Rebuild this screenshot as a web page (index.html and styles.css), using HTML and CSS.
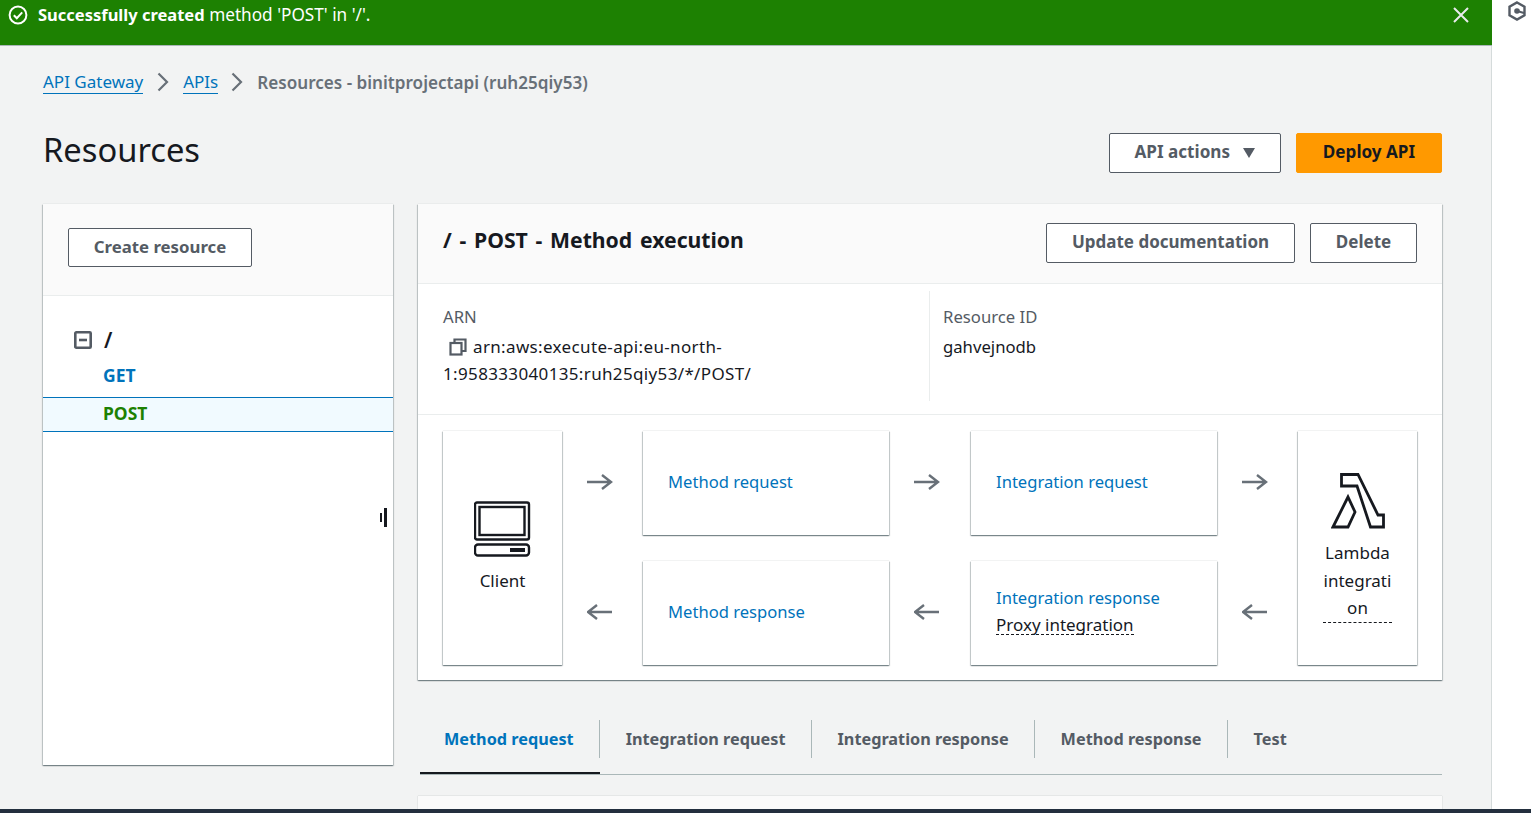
FILE: index.html
```html
<!DOCTYPE html>
<html lang="en">
<head>
  <meta charset="UTF-8">
  <title>Resources - API Gateway</title>
  <link rel="stylesheet" href="styles.css">
</head>
<body>
  <div class="shell">
    <div class="main">
      <div class="flash">
        <svg class="flash-icon" width="20" height="20" viewBox="0 0 20 20" fill="none" stroke="#fff" stroke-width="2"><circle cx="10" cy="10" r="8.4"/><path d="M5.8 10.2l3 3 5.4-5.8"/></svg>
        <span class="flash-text"><b>Successfully created</b> method 'POST' in '/'.</span>
        <svg class="flash-close" width="18" height="18" viewBox="0 0 18 18" stroke="#e9ebed" stroke-width="2"><path d="M2 2l14 14M16 2L2 16"/></svg>
      </div>

      <div class="content">
        <div class="crumbs">
          <a href="#">API Gateway</a>
          <svg class="crumb-sep" width="12" height="20" viewBox="0 0 12 20" fill="none" stroke="#687078" stroke-width="2.2"><path d="M1.5 1.5L10 10l-8.500 8.500"/></svg>
          <a href="#">APIs</a>
          <svg class="crumb-sep crumb-sep-last" width="12" height="20" viewBox="0 0 12 20" fill="none" stroke="#687078" stroke-width="2.2"><path d="M1.5 1.500L10 10l-8.500 8.500"/></svg>
          <span class="crumb-current">Resources - binitprojectapi (ruh25qiy53)</span>
        </div>

        <div class="page-head">
          <h1>Resources</h1>
          <div class="page-actions">
            <button class="btn btn-actions">API actions <span class="caret"></span></button>
            <button class="btn btn-primary">Deploy API</button>
          </div>
        </div>

        <div class="columns">
          <div class="side">
            <div class="side-head">
              <button class="btn btn-create">Create resource</button>
            </div>
            <div class="tree">
              <div class="tree-root">
                <svg width="18" height="18" viewBox="0 0 18 18" fill="none" stroke="#545b64" stroke-width="2.6"><rect x="1.3" y="1.3" width="15.400" height="15.400" rx="1"/><path d="M5 9h8"/></svg>
                <span class="tree-slash">/</span>
              </div>
              <div class="tree-method get">GET</div>
              <div class="tree-method post">POST</div>
            </div>
            <div class="resizer"><span class="grip-short"></span><span class="grip-long"></span></div>
          </div>

          <div class="detail">
            <div class="card">
              <div class="card-head">
                <h2>/ - POST - Method execution</h2>
                <div class="card-actions">
                  <button class="btn btn-doc">Update documentation</button>
                  <button class="btn btn-delete">Delete</button>
                </div>
              </div>

              <div class="info">
                <div class="info-col info-arn">
                  <div class="info-label">ARN</div>
                  <div class="info-value arn-value">
                    <svg class="copy-icon" width="18" height="18" viewBox="0 0 18 18" fill="none" stroke="#545b64" stroke-width="2.2"><rect x="1.500" y="5" width="11" height="11.500"/><path d="M5.500 5V1.500h11V13h-4"/></svg>arn:aws:execute-api:eu-north-1:958333040135:ruh25qiy53/*/POST/
                  </div>
                </div>
                <div class="info-col info-id">
                  <div class="info-label">Resource ID</div>
                  <div class="info-value">gahvejnodb</div>
                </div>
              </div>

              <div class="flow">
                <div class="box box-end box-client">
                  <svg width="58" height="56" viewBox="0 0 58 56" fill="none" stroke="#16191f" stroke-width="2.4"><rect x="1" y="1.500" width="54" height="37" rx="2"/><rect x="5.500" y="6" width="45" height="28"/><rect x="1" y="43.500" width="54" height="11" rx="3"/><rect x="36" y="47" width="15" height="4" fill="#16191f" stroke="none"/></svg>
                  <div class="box-name">Client</div>
                </div>
                <div class="arrow"><svg width="26" height="18" viewBox="0 0 26 18" fill="none" stroke="#687078" stroke-width="2.4"><path d="M0 9h24M15 2l9 7-9 7"/></svg></div>
                <div class="box"><a href="#">Method request</a></div>
                <div class="arrow arrow-mid"><svg width="26" height="18" viewBox="0 0 26 18" fill="none" stroke="#687078" stroke-width="2.4"><path d="M0 9h24M15 2l9 7-9 7"/></svg></div>
                <div class="box"><a href="#">Integration request</a></div>
                <div class="arrow"><svg width="26" height="18" viewBox="0 0 26 18" fill="none" stroke="#687078" stroke-width="2.4"><path d="M0 9h24M15 2l9 7-9 7"/></svg></div>
                <div class="box box-end box-lambda">
                  <svg width="54" height="56" viewBox="0 0 54 56" fill="none" stroke="#16191f" stroke-width="2.800"><path d="M10.500 1.500h16.500l20 40.500h5.500v12H39.500L26 13H10.500z"/><path d="M17 24L2 54h15l7-15z"/></svg>
                  <div class="box-name"><span class="dotted-block">Lambda integration</span></div>
                </div>
                <div class="arrow"><svg width="26" height="18" viewBox="0 0 26 18" fill="none" stroke="#687078" stroke-width="2.4"><path d="M25 9H1M10 2L1 9l9 7"/></svg></div>
                <div class="box"><a href="#">Method response</a></div>
                <div class="arrow arrow-mid"><svg width="26" height="18" viewBox="0 0 26 18" fill="none" stroke="#687078" stroke-width="2.4"><path d="M25 9H1M10 2L1 9l9 7"/></svg></div>
                <div class="box box-stack">
                  <a href="#">Integration response</a>
                  <span class="proxy">Proxy integration</span>
                </div>
                <div class="arrow"><svg width="26" height="18" viewBox="0 0 26 18" fill="none" stroke="#687078" stroke-width="2.4"><path d="M25 9H1M10 2L1 9l9 7"/></svg></div>
              </div>
            </div>

            <div class="tabs">
              <div class="tab active"><span>Method request</span></div>
              <div class="tab"><span>Integration request</span></div>
              <div class="tab"><span>Integration response</span></div>
              <div class="tab"><span>Method response</span></div>
              <div class="tab last"><span>Test</span></div>
            </div>
            <div class="tab-panel"></div>
          </div>
        </div>
      </div>
    </div>

    <div class="rail">
      <svg width="20" height="20" viewBox="0 0 20 20" fill="none"><path d="M10 1.500l7.500 4.300v8.400L10 18.500l-7.500-4.300V5.800z" stroke="#545b64" stroke-width="2.400"/><circle cx="10" cy="10" r="2.800" fill="#545b64"/><path d="M10 10l7 2" stroke="#545b64" stroke-width="2"/></svg>
    </div>
  </div>
  <div class="footer-bar"></div>
</body>
</html>
```

FILE: styles.css
```css
* {
  box-sizing: border-box;
}
html, body {
  margin: 0;
  height: 813px;
  overflow: hidden;
}
body {
  background-color: #fff;
  color: #16191f;
  font-family: 'Noto Sans', 'Open Sans', sans-serif;
  font-size: 17px;
  line-height: 27px;
}
a {
  color: #0073bb;
  text-decoration: none;
}
.shell {
  display: flex;
  height: 813px;
}
.main {
  width: 1492px;
  flex: none;
  background-color: #f2f3f3;
  border-right: 1px solid #d5dbdb;
}
.rail {
  flex: 1;
  background-color: #fff;
  padding: 1px 0 0 15px;
}

.flash {
  height: 46px;
  margin-right: -1px;
  display: flex;
  align-items: flex-start;
  background-color: #1d8102;
  border-bottom: 1px solid #aab7b8;
  color: #fff;
  padding: 5px 22px 0 8px;
}
.flash-text {
  margin-left: 10px;
  font-size: 17.200px;
  line-height: 20px;
  flex: 1;
}
.flash-text b {
  font-size: 16.5px;
  font-weight: 700;
}
.flash-close {
  margin-top: 1px;
}

.content {
  padding: 0 49px 0 43px;
}
.crumbs {
  display: flex;
  align-items: center;
  height: 28px;
  margin-top: 23px;
  padding-bottom: 2px;
}
.crumbs a {
  border-bottom: 1px solid #0073bb;
  line-height: 22px;
}
.crumb-sep {
  margin: 0 14px 0 14px;
}
.crumb-sep-last {
  margin: 0 14px 0 13px;
}
.crumb-current {
  color: #687078;
  font-size: 17.1px;
  font-weight: 600;
}

.page-head {
  display: flex;
  justify-content: space-between;
  align-items: center;
  height: 40px;
  margin-top: 36px;
}
h1 {
  margin: -6px 0 0;
  font-size: 32.7px;
  font-weight: 400;
  line-height: 40px;
}
.page-actions {
  display: flex;
  gap: 15px;
}
.btn {
  height: 40px;
  padding: 0 0 2px;
  background-color: #fff;
  border: 1px solid #545b64;
  border-radius: 2px;
  color: #545b64;
  font-family: inherit;
  font-size: 17px;
  font-weight: 700;
  cursor: pointer;
}
.page-actions .btn {
  padding-bottom: 3px;
  font-size: 17.1px;
}
.btn-actions {
  width: 172px;
}
.caret {
  display: inline-block;
  width: 0;
  height: 0;
  margin-left: 9px;
  border-left: 6.500px solid transparent;
  border-right: 6.500px solid transparent;
  border-top: 10px solid #545b64;
}
.btn-primary {
  width: 146px;
  background-color: #ff9900;
  border-color: #ff9900;
  color: #16191f;
}
.btn-create {
  width: 184px;
  height: 39px;
  font-size: 16.8px;
}
.btn-doc {
  width: 249px;
}
.btn-delete {
  width: 107px;
}

.columns {
  display: flex;
  gap: 25px;
  margin-top: 31px;
}
.side {
  position: relative;
  width: 350px;
  height: 561px;
  flex: none;
  background-color: #fff;
  box-shadow: 0 0 1px 0 rgba(0, 28, 36, 0.2), 0 1px 1px 0 rgba(0, 28, 36, 0.3), 1px 1px 1px 0 rgba(0, 28, 36, 0.15), -1px 1px 1px 0 rgba(0, 28, 36, 0.15);
}
.side-head {
  height: 92px;
  padding: 24px 25px 0;
  background-color: #fafafa;
  border-bottom: 1px solid #eaeded;
}
.tree {
  padding-top: 28px;
}
.tree-root {
  display: flex;
  align-items: center;
  height: 32px;
  padding-left: 31px;
}
.tree-slash {
  margin-left: 12px;
  font-size: 21px;
  font-weight: 600;
}
.tree-method {
  display: flex;
  align-items: center;
  padding: 0 0 2px 60px;
  font-size: 17.5px;
  font-weight: 700;
}
.get {
  height: 41px;
  color: #0073bb;
}
.post {
  height: 35px;
  color: #1d8102;
  background-color: #f1faff;
  border-top: 1px solid #0073bb;
  border-bottom: 1px solid #0073bb;
}
.resizer {
  position: absolute;
  top: 304px;
  left: 337px;
  display: flex;
  align-items: center;
  gap: 2px;
}
.grip-short {
  width: 2px;
  height: 9px;
  background-color: #16191f;
}
.grip-long {
  width: 3px;
  height: 19px;
  background-color: #16191f;
}

.detail {
  flex: 1;
  min-width: 0;
}
.card {
  height: 476px;
  background-color: #fff;
  box-shadow: 0 0 1px 0 rgba(0, 28, 36, 0.2), 0 1px 1px 0 rgba(0, 28, 36, 0.3), 1px 1px 1px 0 rgba(0, 28, 36, 0.15), -1px 1px 1px 0 rgba(0, 28, 36, 0.15);
}
.card-head {
  display: flex;
  justify-content: space-between;
  align-items: center;
  height: 80px;
  padding: 0 25px;
  background-color: #fafafa;
  border-bottom: 1px solid #eaeded;
}
h2 {
  margin: -7px 0 0;
  font-size: 21.2px;
  font-weight: 700;
  line-height: 30px;
  word-spacing: 2.2px;
}
.card-actions {
  display: flex;
  gap: 15px;
  margin-top: -2px;
}

.info {
  display: flex;
  height: 131px;
  padding: 7px 25px 0;
  border-bottom: 1px solid #eaeded;
}
.info-col {
  height: 110px;
  padding-top: 12px;
}
.info-arn {
  width: 487px;
  padding-right: 130px;
  border-right: 1px solid #eaeded;
}
.info-id {
  padding-left: 13px;
  font-size: 16.7px;
}
.info-label {
  color: #545b64;
  height: 30px;
  font-size: 16.700px;
}
.arn-value {
  letter-spacing: 0.35px;
}
.copy-icon {
  margin: 0 6px;
  vertical-align: -3px;
}

.flow {
  display: grid;
  grid-template-columns: 119px 81px 246px 82px 246px 81px 119px;
  grid-template-rows: 104px 104px;
  row-gap: 26px;
  padding: 16px 25px;
}
.box {
  display: flex;
  align-items: center;
  padding: 0 0 3px 25px;
  background-color: #fff;
  font-size: 16.6px;
  box-shadow: 0 0 1px 0 rgba(0, 28, 36, 0.3), 0 1px 1px 0 rgba(0, 28, 36, 0.3), 1px 1px 1px 0 rgba(0, 28, 36, 0.15), -1px 1px 1px 0 rgba(0, 28, 36, 0.15);
}
.box-stack {
  flex-direction: column;
  align-items: flex-start;
  justify-content: center;
  padding-bottom: 8px;
}
.proxy {
  margin-top: 5px;
  font-size: 17px;
  border-bottom: 1px dashed #16191f;
  line-height: 18px;
}
.box-end {
  grid-row: span 2;
  flex-direction: column;
  justify-content: flex-start;
  padding: 0 25px;
  text-align: center;
}
.box-client {
  grid-row: 1 / span 2;
  grid-column: 1;
  padding-top: 70px;
}
.box-lambda {
  grid-row: 1 / span 2;
  grid-column: 7;
  padding-top: 42px;
}
.box-end svg {
  flex: none;
}
.box-name {
  margin-top: 10px;
  width: 100%;
  font-size: 17px;
  word-break: break-all;
}
.box-client .box-name {
  white-space: nowrap;
}
.box-lambda .box-name {
  line-height: 27.5px;
}
.dotted-block {
  display: block;
  border-bottom: 1px dashed #16191f;
}
.arrow {
  display: flex;
  align-items: center;
  justify-content: center;
  padding: 0 5px 2px 0;
}
.arrow-mid {
  padding-right: 7px;
}

.tabs {
  display: flex;
  align-items: flex-start;
  height: 55px;
  margin-top: 40px;
  margin-left: 2px;
  border-bottom: 1px solid #aab7b8;
}
.tab {
  height: 54px;
  color: #545b64;
  font-size: 16.26px;
  font-weight: 700;
}
.tab span {
  display: block;
  height: 38px;
  padding: 0 25px 0 26px;
  line-height: 38px;
  border-right: 1px solid #aab7b8;
}
.tab.last span {
  border-right: none;
}
.tab.active {
  color: #0073bb;
  border-bottom: 2px solid #16191f;
}
.tab.active span {
  padding-left: 24px;
}
.tab-panel {
  height: 40px;
  margin-top: 21px;
  background-color: #fafafa;
  box-shadow: 0 0 1px 0 rgba(0, 28, 36, 0.3);
}
.footer-bar {
  position: absolute;
  left: 0;
  right: 0;
  top: 809px;
  height: 4px;
  background-color: #232f3e;
}
```
